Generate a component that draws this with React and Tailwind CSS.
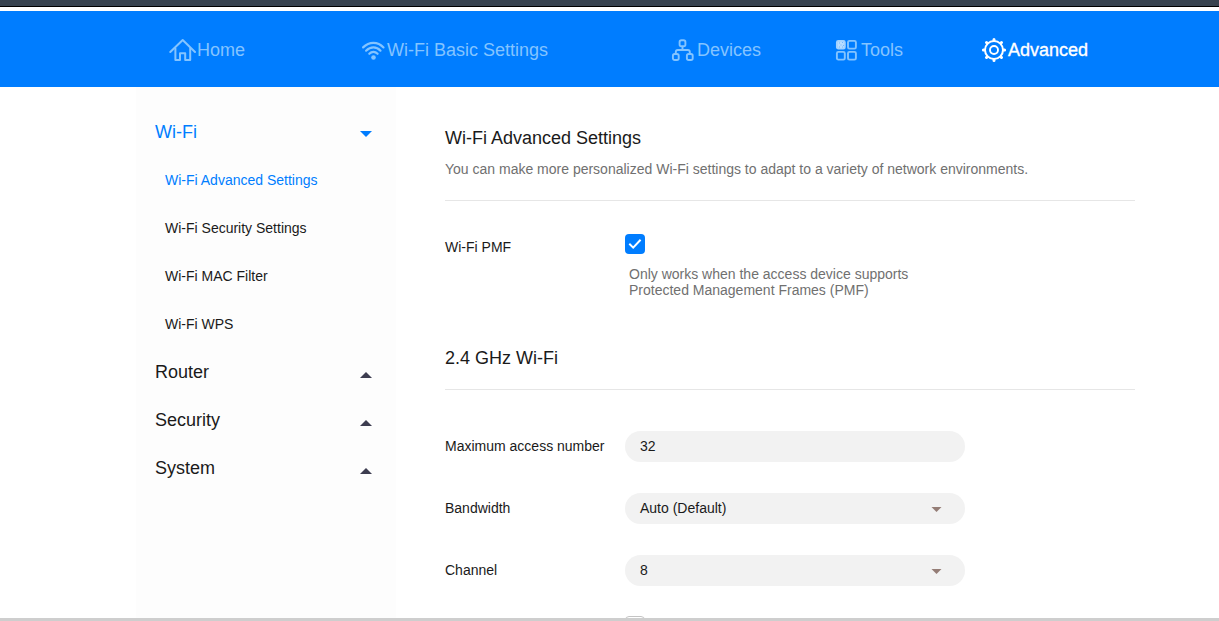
import { useState } from "react";

const HomeIcon = () => (
  <svg width="28" height="24" viewBox="0 0 28 24" fill="none" stroke="currentColor" strokeWidth="2" strokeLinecap="round" strokeLinejoin="round">
    <path d="M1.3 14 13.7 2 26 14" />
    <path d="M6.4 10.5V22.1H11V15.2H16.2V22.1H21.2V10.5" />
  </svg>
);

const WifiIcon = () => (
  <svg width="26" height="24" viewBox="0 0 26 24" fill="none" stroke="currentColor" strokeWidth="2.2" strokeLinecap="round">
    <path d="M2.1 9.4C8.2 3.3 16.8 3.3 22.5 9.4" />
    <path d="M5.1 12.7C9.6 8.2 15.4 8.2 19.5 12.7" />
    <path d="M8.3 15.8C10.8 13.2 14 13.2 16.6 15.8" />
    <circle cx="12.5" cy="19.5" r="2.3" fill="currentColor" stroke="none" />
  </svg>
);

const DevicesIcon = () => (
  <svg width="26" height="24" viewBox="0 0 26 24" fill="none" stroke="currentColor" strokeWidth="1.9">
    <rect x="8.6" y="2.3" width="5.8" height="6" rx="1.8" />
    <rect x="1.9" y="16" width="5.8" height="6" rx="1.8" />
    <rect x="15.9" y="16" width="5.8" height="6" rx="1.8" />
    <path d="M11.5 8.3V12M4.8 16V14Q4.8 12 6.8 12H16.8Q18.8 12 18.8 14V16" />
  </svg>
);

const ToolsIcon = () => (
  <svg width="26" height="24" viewBox="0 0 26 24" fill="none" stroke="currentColor" strokeWidth="1.9">
    <rect x="1.9" y="2.9" width="7.9" height="7.7" rx="1.4" fill="#b9dcff" stroke="#a3d2ff" />
    <path d="M4 5h1M7 4.5h1M5.5 7h1M8 7.5h1M4 9h1M7 9h1" stroke="#6fb7ff" strokeWidth="1" />
    <rect x="13" y="2.9" width="7.9" height="7.7" rx="1.4" />
    <rect x="1.9" y="13.9" width="7.9" height="7.7" rx="1.4" />
    <rect x="13" y="13.9" width="7.9" height="7.7" rx="1.4" />
  </svg>
);

const GearIcon = () => (
  <svg width="27" height="26" viewBox="0 0 27 26" fill="none" stroke="currentColor">
    <circle cx="13" cy="13" r="9" strokeWidth="2" />
    <circle cx="13" cy="13" r="4" strokeWidth="1.9" />
    <path
      d="M13 3.2V2.4M13 22.8V23.6M3.2 13H2.4M22.8 13H23.6M6.1 6.1 5.5 5.5M19.9 6.1 20.5 5.5M6.1 19.9 5.5 20.5M19.9 19.9 20.5 20.5"
      strokeWidth="3"
      strokeLinecap="round"
    />
  </svg>
);

const navItems = [
  { id: "home", label: "Home", icon: HomeIcon, width: "w-48" },
  { id: "wifi", label: "Wi-Fi Basic Settings", icon: WifiIcon, width: "w-[310px]" },
  { id: "devices", label: "Devices", icon: DevicesIcon, width: "w-[164px]" },
  { id: "tools", label: "Tools", icon: ToolsIcon, width: "w-[146px]" },
  { id: "advanced", label: "Advanced", icon: GearIcon, width: "w-[120px]" },
];

const menu = [
  {
    label: "Wi-Fi",
    children: ["Wi-Fi Advanced Settings", "Wi-Fi Security Settings", "Wi-Fi MAC Filter", "Wi-Fi WPS"],
  },
  { label: "Router", children: [] },
  { label: "Security", children: [] },
  { label: "System", children: [] },
];

function Caret({ up, className }) {
  return (
    <svg width="12" height="6" viewBox="0 0 12 6" fill="currentColor" className={className}>
      <path d={up ? "M0 6 6 0 12 6Z" : "M0 0H12L6 6Z"} />
    </svg>
  );
}

function Header() {
  return (
    <header className="h-[76px] shrink-0 bg-[#007dff]">
      <nav className="flex h-full items-center pl-[169px] pt-0.5 text-lg">
        {navItems.map(({ id, label, icon: Icon, width }) => (
          <a
            key={id}
            href={"#" + id}
            className={`flex shrink-0 items-center whitespace-nowrap ${width} ${id === "advanced" ? "text-white [-webkit-text-stroke:0.35px_white]" : "text-[#84c4ff]"}`}
          >
            <Icon />
            <span>{label}</span>
          </a>
        ))}
      </nav>
    </header>
  );
}

function Sidebar() {
  const [open, setOpen] = useState("Wi-Fi");
  const [page, setPage] = useState("Wi-Fi Advanced Settings");

  return (
    <aside className="ml-[136px] w-[260px] shrink-0 bg-[#fdfdfd] pt-[21px]">
      {menu.map((group) => {
        const isOpen = open === group.label;
        return (
          <div key={group.label}>
            <button
              onClick={() => setOpen(isOpen ? "" : group.label)}
              className={`flex h-12 w-full items-center justify-between pl-[19px] pr-6 text-lg ${isOpen ? "text-[#007dff]" : "text-[#1a1a1a]"}`}
            >
              <span>{group.label}</span>
              <Caret up={!isOpen} className={isOpen ? "mt-1" : "mt-1.5 text-[#3d3d50]"} />
            </button>
            {isOpen &&
              group.children.map((item) => (
                <button
                  key={item}
                  onClick={() => setPage(item)}
                  className={`flex h-12 w-full items-center pl-[29px] text-sm ${page === item ? "text-[#007dff]" : "text-[#1a1a1a]"}`}
                >
                  {item}
                </button>
              ))}
          </div>
        );
      })}
    </aside>
  );
}

function Field({ label, value, select }) {
  return (
    <div className="mb-[31px] flex h-[31px] items-center text-sm">
      <span className="w-[180px] shrink-0 pb-0.5">{label}</span>
      <div className="flex h-full w-[340px] items-center justify-between rounded-full bg-[#f2f2f2] pl-[15px] pr-[23px]">
        <span className="pb-0.5">{value}</span>
        {select && <Caret className="mt-0.5 h-[5px] w-[11px] text-[#947d76]" />}
      </div>
    </div>
  );
}

function Content() {
  const [pmf, setPmf] = useState(true);

  return (
    <main className="ml-[49px] w-[690px] shrink-0 text-[#1a1a1a]">
      <h1 className="mt-[37px] text-lg">Wi-Fi Advanced Settings</h1>
      <p className="mt-[7px] text-sm text-[#707070]">
        You can make more personalized Wi-Fi settings to adapt to a variety of network environments.
      </p>
      <hr className="mt-[21px] border-[#e6e6e6]" />

      <div className="mt-[33px] flex">
        <span className="mt-[3px] w-[180px] shrink-0 text-sm">Wi-Fi PMF</span>
        <div>
          <button
            role="checkbox"
            aria-checked={pmf}
            aria-label="Wi-Fi PMF"
            onClick={() => setPmf(!pmf)}
            className={`flex size-5 items-center justify-center rounded ${pmf ? "bg-[#007dff]" : "border border-gray-300"}`}
          >
            {pmf && (
              <svg width="14" height="12" viewBox="0 0 14 12" fill="none" stroke="white" strokeWidth="2">
                <path d="M1.3 5.8 5.2 9.6 12.6 1.8" />
              </svg>
            )}
          </button>
          <p className="ml-1 mt-3 w-[300px] text-sm leading-4 text-[#707070]">
            Only works when the access device supports Protected Management Frames (PMF)
          </p>
        </div>
      </div>

      <h2 className="mt-[46px] text-lg">2.4 GHz Wi-Fi</h2>
      <hr className="mb-[41px] mt-[17px] border-[#e6e6e6]" />

      <Field label="Maximum access number" value="32" />
      <Field label="Bandwidth" value="Auto (Default)" select />
      <Field label="Channel" value="8" select />
      <div className="-mt-px ml-[180px] size-5 rounded border border-[#c4c4c4]" />
    </main>
  );
}

export default function App() {
  return (
    <div className="flex h-screen flex-col overflow-hidden bg-white font-['Liberation_Sans',Arial,sans-serif]">
      <div className="mb-1 h-[7px] shrink-0 border-b border-black bg-[#38434f]" />
      <Header />
      <div className="flex min-h-0 flex-1 overflow-hidden">
        <Sidebar />
        <Content />
      </div>
      <div className="h-[3px] shrink-0 bg-[#cecece]" />
    </div>
  );
}
